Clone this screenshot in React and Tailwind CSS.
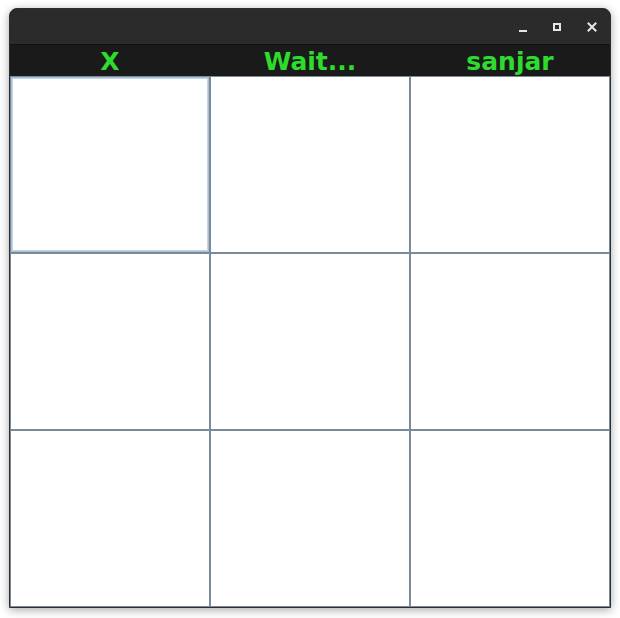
import { useState } from 'react';

const CELDAS = [0, 1, 2, 3, 4, 5, 6, 7, 8];

export default function App() {
  const [celdas] = useState(Array(9).fill(''));
  const foco = 0;

  return (
    <div className="w-[620px] h-[618px] bg-white relative" style={{ fontFamily: '"DejaVu Sans", sans-serif' }}>
      <div className="absolute left-[9px] top-[8px] w-[602px] h-[600px] flex flex-col border border-[#2e2e2e] rounded-t-[8px] overflow-hidden shadow-[0_2px_10px_rgba(0,0,0,0.35)] bg-[#1b1b1b]">
        {/* Barra de título */}
        <div className="h-[36px] bg-[#2b2b2b] flex items-center justify-end pr-[12px] gap-[26px] border-b border-[#111111]">
          <div className="w-[8px] h-[10px] flex items-end">
            <div className="w-[8px] h-[2px] bg-[#e6e6e6]" />
          </div>
          <div className="w-[8px] h-[8px] border-2 border-[#e6e6e6]" />
          <svg width="10" height="10" viewBox="0 0 10 10" className="mr-[1px]">
            <path d="M1.5 1.5L8.5 8.5M8.5 1.5L1.5 8.5" stroke="#e6e6e6" strokeWidth="2" strokeLinecap="square" />
          </svg>
        </div>

        {/* Estado */}
        <div className="h-[31px] bg-[#1a1a1a] grid grid-cols-3 items-center text-[25px] leading-none font-bold text-[#2ddc2d]">
          <div className="text-center pt-px">X</div>
          <div className="text-center pt-px">Wait...</div>
          <div className="text-center pt-px">sanjar</div>
        </div>

        {/* Tablero */}
        <div className="flex-1 grid grid-cols-3 grid-rows-3 gap-[2px] p-px bg-[#7b8a9b]">
          {CELDAS.map(i => (
            <button
              key={i}
              className={
                i === foco
                  ? 'bg-white shadow-[inset_0_0_0_1px_#a9bfd6,inset_0_0_0_2px_#c4d5e6]'
                  : 'bg-white'
              }
            >
              {celdas[i]}
            </button>
          ))}
        </div>
      </div>
    </div>
  );
}
